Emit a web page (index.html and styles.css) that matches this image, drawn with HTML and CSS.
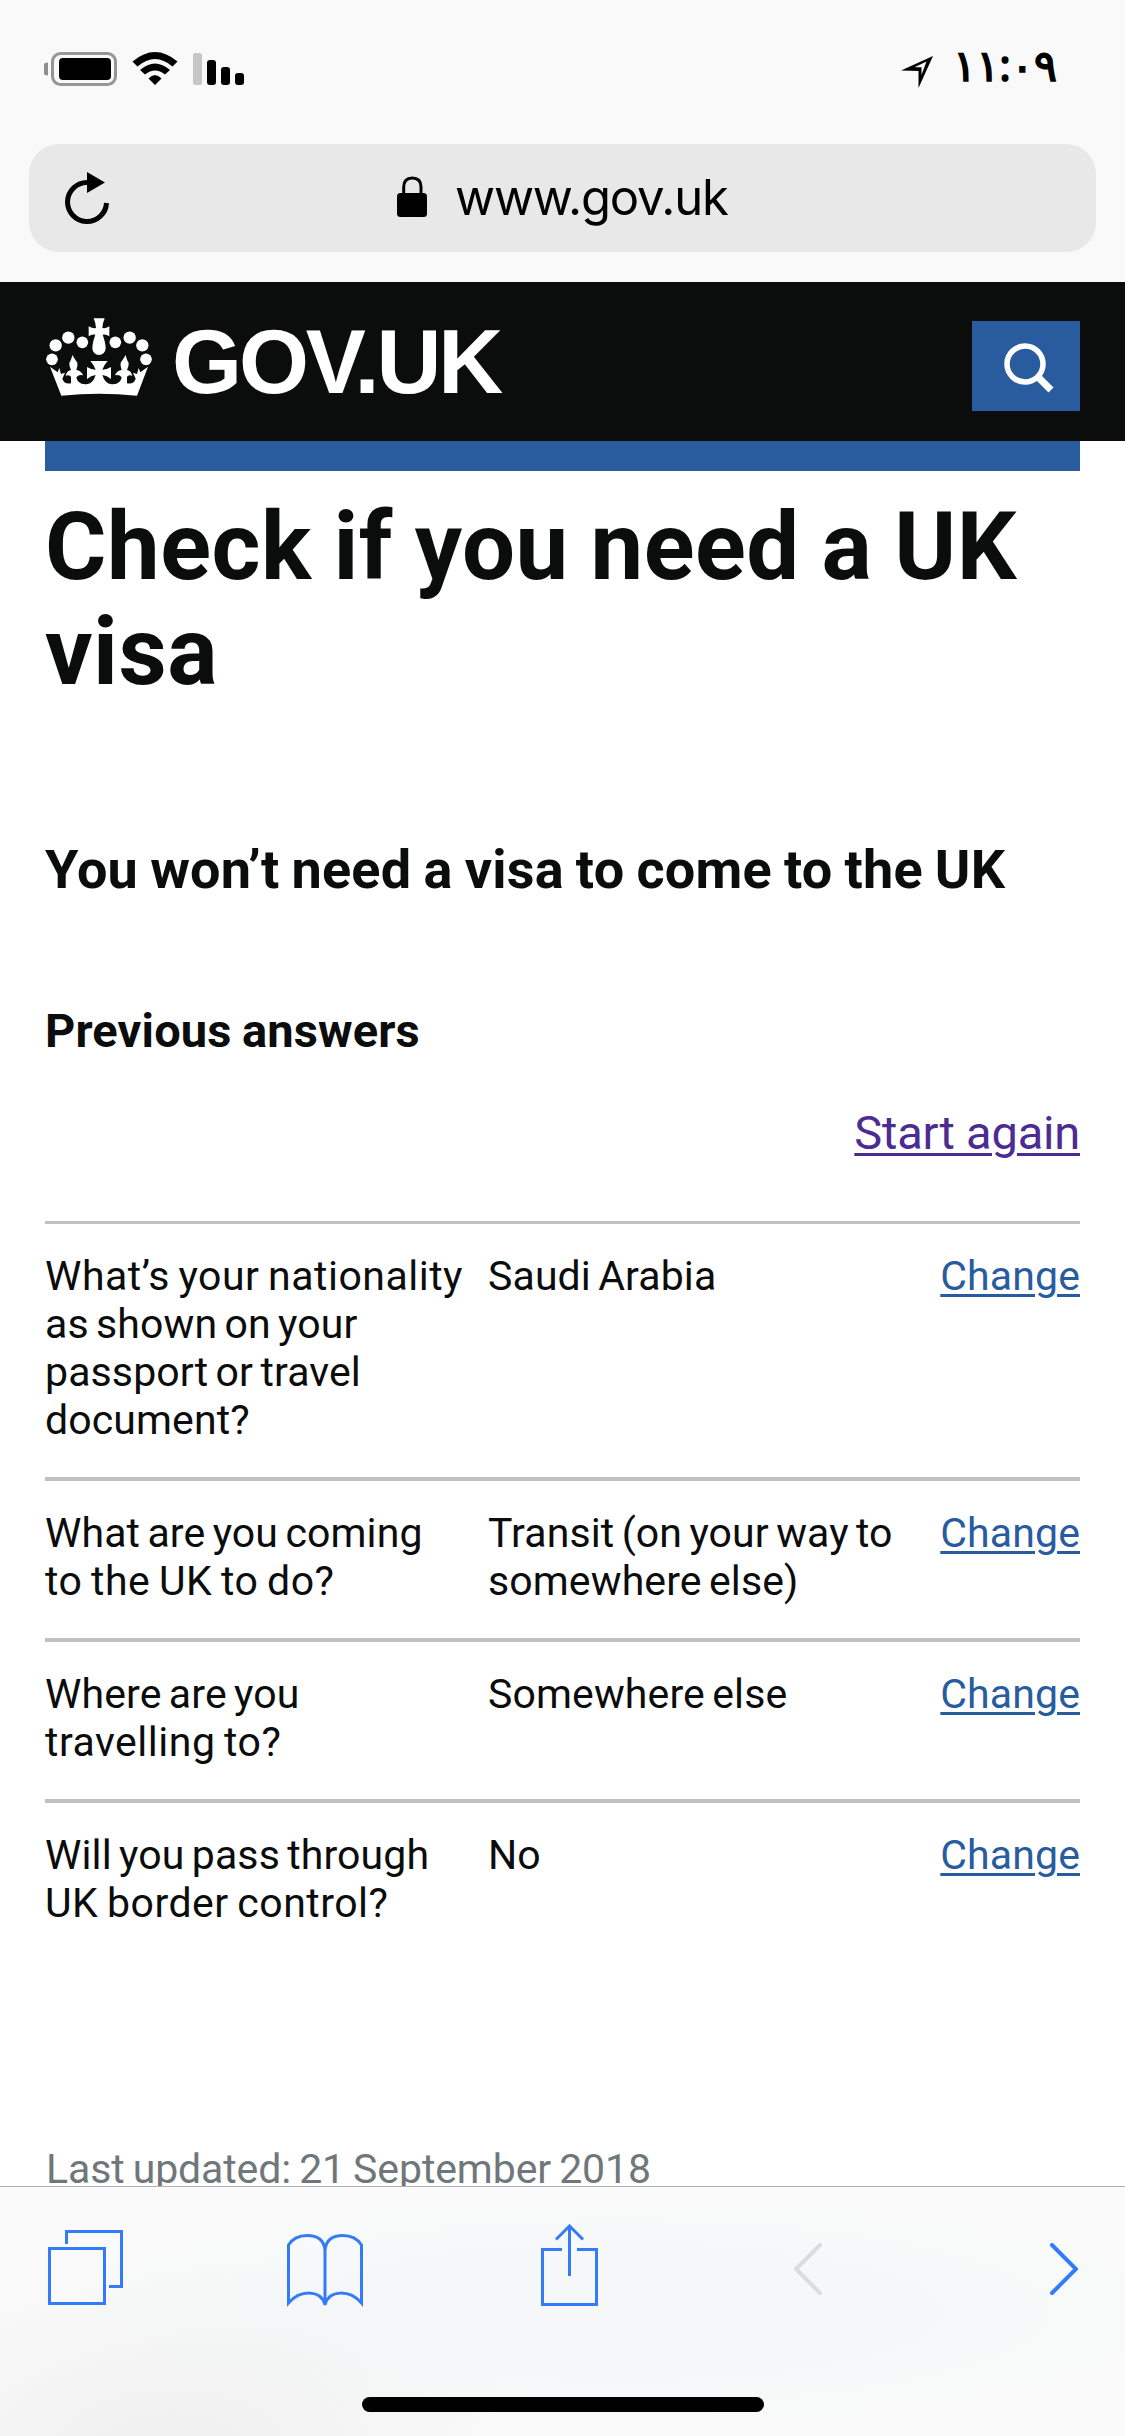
FILE: index.html
```html
<!DOCTYPE html>
<html lang="en">
<head>
<meta charset="utf-8">
<title>Check if you need a UK visa - GOV.UK</title>
<link rel="stylesheet" href="styles.css">
</head>
<body>
<div class="status-bar">
  <svg class="status-icons" width="202" height="36" viewBox="44 51 202 36">
    <path d="M48 62.500a6.500 6.500 0 0 0 0 13z" fill="#8f8f8f"/>
    <rect x="52.500" y="53.500" width="63" height="31" rx="8" fill="none" stroke="#969696" stroke-width="3"/>
    <rect x="59" y="58" width="52" height="22" rx="4"/>
    <path d="M132.500 61.500Q155 42.500 177.500 61.500L172.500 66.500Q155 51.500 137.500 66.500Z"/>
    <path d="M140 70Q155 57 170 70L165 74.500Q155 66.500 145 74.500Z"/>
    <path d="M148.500 78.500Q155 71.500 161.500 78.500L155 85Z"/>
    <rect x="193" y="53" width="9" height="32" rx="2.500" fill="#c6c6c6"/>
    <rect x="207" y="60" width="9" height="25" rx="3"/>
    <rect x="221" y="67" width="9" height="18" rx="3"/>
    <rect x="235" y="73" width="9" height="12" rx="3"/>
  </svg>
  <div class="status-time">
    <svg width="32" height="32" viewBox="0 0 32 32"><path fill-rule="evenodd" d="M32 0L17.500 32V15L0 14.500ZM25.500 5.500L13.500 11.300H20.500V19Z"/></svg>
    <span class="clock" dir="ltr">١١:٠٩</span>
  </div>
</div>
<div class="address-row">
  <div class="address-bar">
    <svg class="reload" width="45" height="53" viewBox="0 0 45 53"><path d="M22.500 10.500A19.500 19.500 0 1 0 41.500 31" fill="none" stroke="#000" stroke-width="5"/><path d="M22 0L40 10.500L22 21Z"/></svg>
    <div class="site">
      <svg width="30" height="42" viewBox="0 0 30 42"><path d="M6.700 18V11Q6.700 2 15.300 2T24 11V18" fill="none" stroke="#000" stroke-width="3"/><rect y="17" width="30" height="24" rx="3.500"/></svg>
      <span>www.gov.uk</span>
    </div>
  </div>
</div>
<header class="site-header">
  <a class="logo">
    <svg width="106" height="79" viewBox="33 40 318 237" fill="#fff">
      <circle cx="51" cy="164" r="17.500"/><circle cx="62" cy="122" r="18.500"/><circle cx="100" cy="99" r="18.500"/><circle cx="142" cy="113" r="17.500"/>
      <circle cx="241" cy="113" r="17.500"/><circle cx="284" cy="99" r="18.500"/><circle cx="322" cy="122" r="18.500"/><circle cx="333" cy="164" r="17.500"/>
      <path d="M176 41H209Q203 55 202 70Q215 72 223 65V95Q213 88 203 90Q212 115 212 130A20 21 0 0 1 172 130Q172 115 181 90Q170 88 161 95V65Q170 72 183 70Q182 55 176 41Z"/>
      <path d="M45 186L68 203L73 190L78 208L90 204L82 222Q88 240 108 236V216Q98 208 92 215Q94 199 108 196Q102 185 103 174Q108 168 112 151Q119 163 127 174Q129 185 124 196Q139 198 144 212Q132 208 124 218Q128 242 158 238Q174 236 182 211Q168 212 156 223V187Q168 195 182 195Q178 182 166 169H218Q206 182 202 195Q216 195 228 187V223Q216 212 202 211Q210 236 226 238Q256 242 260 218Q252 208 240 212Q245 198 260 196Q255 185 257 174Q265 163 272 151Q276 168 281 174Q282 185 276 196Q290 199 292 215Q286 208 276 216V236Q296 240 302 222L294 204L306 208L311 190L316 203L339 186L306 273Q192 262 79 273Z"/>
    </svg>
    <span class="logo-text">GOV.UK</span>
  </a>
  <button class="search" aria-label="Search">
    <svg width="50" height="50" viewBox="0 0 50 50" fill="none" stroke="#fff"><circle cx="21" cy="21" r="18" stroke-width="5.500"/><path d="M34 34L47 47" stroke-width="7"/></svg>
  </button>
</header>
<main class="page">
  <div class="banner"></div>
  <h1>Check if you need a UK visa</h1>
  <h2>You won’t need a visa to come to the UK</h2>
  <h3>Previous answers</h3>
  <p class="restart"><a>Start again</a></p>
  <div class="answers">
    <div class="answer"><div><span class="wide">What’s your nationality</span><br>as shown on your<br>passport or travel<br>document?</div><div>Saudi Arabia</div><a>Change</a></div>
    <div class="answer"><div>What are you coming<br><span class="wide">to the UK to do?</span></div><div>Transit (on your way to<br>somewhere else)</div><a>Change</a></div>
    <div class="answer"><div>Where are you<br><span class="wide">travelling to?</span></div><div>Somewhere else</div><a>Change</a></div>
    <div class="answer"><div>Will you pass through<br><span class="wide">UK border control?</span></div><div>No</div><a>Change</a></div>
  </div>
  <p class="updated">Last updated: 21 September 2018</p>
</main>
<nav class="toolbar">
  <div class="tools">
    <svg width="75" height="75" viewBox="0 0 75 75"><path d="M1.500 18.500H56.500V73.500H1.500ZM18.500 14V1.500H73.500V56.500H61"/></svg>
    <svg width="76" height="75" viewBox="0 0 76 75"><path d="M38 73V18C37 8 30 3.500 20 3.500C11 3.500 5 7.500 1.500 13V71C13 58 34 57 38 73C42 57 63 58 74.500 71V13C71 7.500 65 3.500 56 3.500C46 3.500 39 8 38 18"/></svg>
    <svg width="57" height="82" viewBox="0 0 57 82"><path d="M21 25.500H1.500V80.500H55.500V25.500H36M28.500 52V2M15 15.500L28.500 2L42 15.500"/></svg>
    <svg class="disabled" width="28" height="52" viewBox="0 0 28 52"><path d="M26 2L2 26L26 50"/></svg>
    <svg class="forward" width="28" height="52" viewBox="0 0 28 52"><path d="M2 2L26 26L2 50"/></svg>
  </div>
  <div class="home-indicator"></div>
</nav>
</body>
</html>
```
FILE: styles.css
```css
* { box-sizing: border-box; }
body {
  margin: 0;
  width: 1125px;
  height: 2436px;
  display: flex;
  flex-direction: column;
  overflow: hidden;
  background: #fff;
  color: #0b0c0c;
  font-family: Roboto, "Noto Sans", sans-serif;
}
svg { display: block; flex: none; }
h1, h2, h3, p { margin: 0; }

/* Phone status bar */
.status-bar {
  flex: none;
  height: 144px;
  padding: 51px 68px 0 44px;
  display: flex;
  justify-content: space-between;
  align-items: flex-start;
  background: #f9f9f9;
}
.status-time { display: flex; gap: 20px; padding-top: 5px; }
.clock {
  margin-top: -15px;
  font: 43px/48px "Noto Sans", "DejaVu Sans", sans-serif;
  -webkit-text-stroke: 1.6px #000;
  letter-spacing: -3.2px;
  color: #000;
}

/* Address bar */
.address-row { flex: none; height: 138px; padding: 0 29px; background: #f9f9f9; }
.address-bar {
  height: 108px;
  padding: 0 36px;
  display: flex;
  align-items: center;
  border-radius: 30px;
  background: #e8e8e8;
}
.reload { margin-top: 1px; }
.site {
  display: flex;
  align-items: center;
  gap: 28px;
  margin-left: 287px;
  font: 49px/60px Inter, sans-serif;
  letter-spacing: -1.2px;
  color: #000;
}
.site svg { margin-top: -3px; }

/* GOV.UK header */
.site-header {
  flex: none;
  height: 159px;
  padding: 36px 45px 0 46px;
  display: flex;
  justify-content: space-between;
  align-items: flex-start;
  background: #0b0c0c;
}
.logo { display: flex; gap: 20px; color: #fff; }
.logo-text { margin-top: -1px; font: bold 90px/90px "Liberation Sans", Arial, sans-serif; letter-spacing: -3.1px; }
.search {
  width: 108px;
  height: 90px;
  margin-top: 3px;
  padding: 3px 0 0 32px;
  display: flex;
  align-items: center;
  border: 0;
  background: #285c9f;
}

/* Page content */
.page { flex: none; height: 1745px; padding: 0 45px; overflow: hidden; }
.banner { height: 30px; background: #285c9f; }
h1 { margin-top: 24px; font-size: 94px; line-height: 105px; letter-spacing: 0.5px; word-spacing: -2px; }
h2 { margin-top: 135px; font-size: 54px; line-height: 60px; letter-spacing: 0.2px; word-spacing: -1.5px; white-space: nowrap; }
h3 { margin-top: 101px; font-size: 47px; line-height: 60px; letter-spacing: 0.15px; word-spacing: -1.5px; }
a { text-decoration-thickness: 3px; text-underline-offset: 4px; }
.restart { margin: 42px 0 58px; text-align: right; font-size: 47px; line-height: 60px; letter-spacing: -0.2px; }
.restart a { color: #4c2c92; text-decoration-line: underline; }
.answers { border-top: 3px solid #bfc1c3; }
.answer {
  display: grid;
  grid-template-columns: 443px 1fr auto;
  padding: 28px 0 33px;
  border-bottom: 4px solid #bfc1c3;
  font-size: 41px;
  line-height: 48px;
  letter-spacing: 0.12px;
  word-spacing: -3px;
  white-space: nowrap;
}
.answer:last-child { border-bottom: 0; }
.answer .wide { letter-spacing: 0.5px; word-spacing: -2px; }
.answer a { color: #285c9f; text-decoration-line: underline; }
.updated { margin-top: 185px; padding-left: 1px; font-size: 41px; line-height: 48px; letter-spacing: -0.1px; word-spacing: -2px; color: #6f777b; }

/* Browser toolbar */
.toolbar {
  flex: none;
  height: 250px;
  border-top: 1px solid #b2b2b2;
  display: flex;
  flex-direction: column;
  align-items: center;
  background:
    radial-gradient(ellipse 360px 200px at 170px 270px, #efefef, rgba(239, 239, 239, 0)),
    radial-gradient(ellipse 560px 120px at 620px 125px, #f5f7f9 45%, rgba(245, 247, 249, 0)),
    #f9faf9;
}
.tools {
  width: 100%;
  height: 210px;
  padding: 0 47px 0 48px;
  display: flex;
  align-items: flex-start;
  fill: none;
  stroke: #347cf7;
  stroke-width: 3;
}
.tools svg { margin-top: 43px; }
.tools svg:nth-child(2) { margin: 45px 0 0 164px; }
.tools svg:nth-child(3) { margin: 37px 0 0 178px; }
.tools .disabled { margin: 56px 0 0 196px; stroke: #dcdcdc; stroke-width: 4; stroke-linecap: round; }
.tools .forward { margin: 56px 0 0 auto; stroke-width: 4; stroke-linecap: round; }
.home-indicator { width: 402px; height: 15px; border-radius: 8px; background: #000; }
```
